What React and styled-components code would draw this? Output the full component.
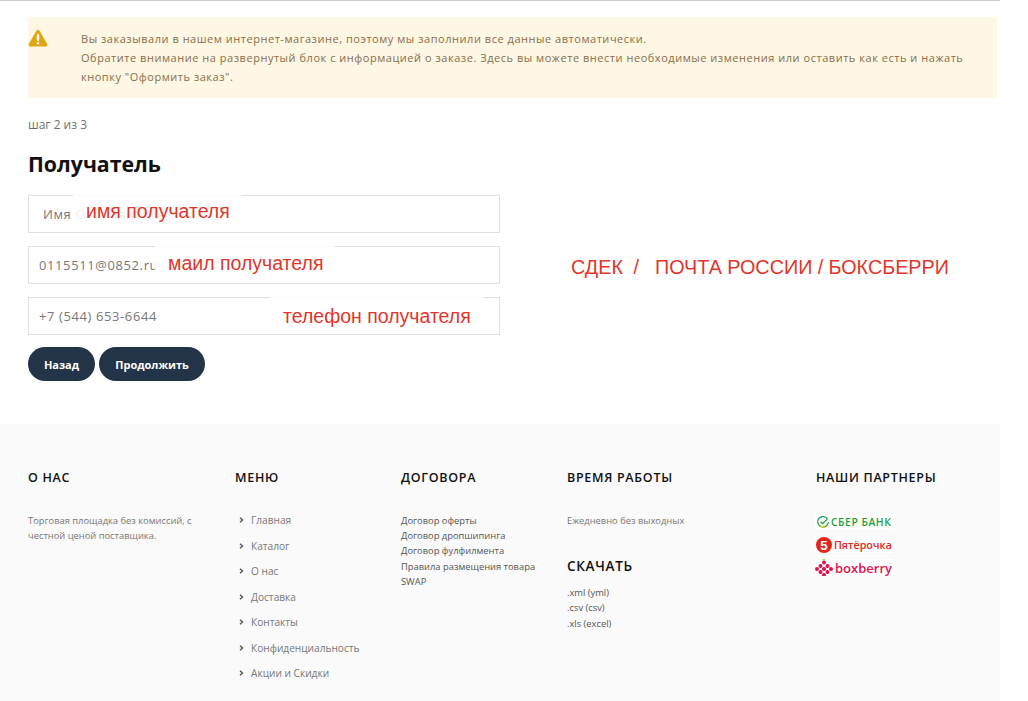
import React from 'react';
import styled, { createGlobalStyle } from 'styled-components';

const GlobalStyle = createGlobalStyle`
  html, body {
    margin: 0;
    padding: 0;
    background: #fff;
  }
  body {
    font-family: "Open Sans", "Noto Sans", sans-serif;
    overflow: hidden;
  }
`;

const Page = styled.div`
  width: 1000px;
  height: 701px;
  overflow: hidden;
  border-top: 1px solid #ccc;
`;

const Main = styled.main`
  height: 423px;
  padding: 16px 3px 0 28px;
  box-sizing: border-box;
`;

const Alert = styled.div`
  display: flex;
  height: 81px;
  box-sizing: border-box;
  padding: 12px 20px 0 0;
  background: #fdf7e3;
  color: #8a6d4b;
  font-size: 11px;
  line-height: 19px;
  letter-spacing: 0.53px;
`;

const AlertIcon = styled.div`
  flex: 0 0 53px;
  height: 20px;
`;

const Step = styled.div`
  margin-top: 18px;
  font-size: 12px;
  line-height: 17px;
  color: #707070;
`;

const Title = styled.h2`
  margin: 17px 0 0;
  font-size: 21.3px;
  line-height: 27px;
  font-weight: 700;
  color: #111;
`;

const Columns = styled.div`
  display: flex;
  align-items: flex-start;
  margin-top: 18px;
`;

const Form = styled.div`
  width: 472px;
  display: flex;
  flex-direction: column;
  gap: 13px;
`;

const Field = styled.div`
  position: relative;
  height: 38px;
  box-sizing: border-box;
  border: 1px solid #e0e0e0;
  padding-left: ${(p) => p.$pad}px;
  display: flex;
  align-items: center;
  font-size: 13px;
  letter-spacing: 0.6px;
  color: #777;
  background: #fff;
`;

const Ghost = styled.span`
  color: #888;
  margin-left: 4px;
`;

const Note = styled.span`
  position: absolute;
  left: ${(p) => p.$left}px;
  top: -1px;
  padding: ${(p) => p.$top}px 12px 0 13px;
  height: 26px;
  background: rgba(255, 255, 255, 0.86);
  font-family: "Liberation Sans", Arial, sans-serif;
  font-size: 19.5px;
  line-height: 24px;
  letter-spacing: 0;
  color: #e2352b;
  white-space: nowrap;
`;

const Buttons = styled.div`
  display: flex;
  gap: 4px;
  margin-top: -1px;
`;

const Button = styled.button`
  height: 34px;
  width: ${(p) => p.$width}px;
  padding: 0;
  border: none;
  border-radius: 17px;
  background: #233348;
  color: #fff;
  font-family: inherit;
  font-size: 11px;
  font-weight: 700;
`;

const Carriers = styled.div`
  margin: 60px 0 0 71px;
  font-family: "Liberation Sans", Arial, sans-serif;
  font-size: 19.8px;
  line-height: 24px;
  word-spacing: -0.2px;
  color: #e2352b;
  white-space: pre;
`;

const Footer = styled.footer`
  height: 277px;
  box-sizing: border-box;
  padding: 45px 0 0 28px;
  background: #fafafa;
  display: grid;
  grid-template-columns: 207px 166px 166px 249px 1fr;
`;

const Heading = styled.h4`
  margin: ${(p) => p.$top || 0}px 0 0;
  font-size: ${(p) => p.$size || 12.5}px;
  line-height: 17px;
  font-weight: 600;
  letter-spacing: 0.7px;
  text-transform: uppercase;
  color: #111;
`;

const Text = styled.p`
  margin: 27px 0 0;
  font-size: 9.35px;
  line-height: 15px;
  color: #777;
  width: 175px;
`;

const MenuList = styled.ul`
  list-style: none;
  margin: 26.5px 0 0;
  padding: 0;
  display: flex;
  flex-direction: column;
  gap: 10.5px;
`;

const MenuItem = styled.li`
  display: flex;
  align-items: center;
  height: 15px;
  font-size: 10.15px;
  color: #777;
`;

const Chevron = styled.svg`
  width: 5px;
  height: 6px;
  margin: 0 7px 0 4px;
  flex: none;
`;

const Links = styled.div`
  margin-top: ${(p) => p.$top}px;
  display: flex;
  flex-direction: column;
  font-size: 9.35px;
  line-height: 15.2px;
  color: ${(p) => p.$color || '#555'};
`;

const Logos = styled.div`
  margin: 29px 0 0 -1px;
  display: flex;
  flex-direction: column;
`;

const Logo = styled.div`
  display: flex;
  align-items: center;
  width: 78px;
  height: ${(p) => p.$height}px;
  margin-top: ${(p) => p.$gap || 0}px;
  gap: ${(p) => p.$space || 2}px;
  background: #fff;
  color: ${(p) => p.$color};
  font-size: ${(p) => p.$size}px;
  font-weight: ${(p) => p.$weight || 700};
  letter-spacing: ${(p) => p.$track || 0}px;
  white-space: nowrap;
  overflow: hidden;
`;

const WarningIcon = () => (
  <svg width="20" height="18" viewBox="0 0 20 18">
    <path d="M10 .8c.7 0 1.200.4 1.600 1l7.600 13.200c.7 1.200-.1 2.400-1.400 2.400H2.200C.9 17.400.1 16.200.8 15L8.400 1.800c.4-.6.9-1 1.600-1z" fill="#e0a510" />
    <rect x="8.800" y="5" width="2.400" height="7" rx="1" fill="#fff" />
    <circle cx="10" cy="14.300" r="1.300" fill="#fff" />
  </svg>
);

const MenuChevron = () => (
  <Chevron viewBox="0 0 5 6">
    <path d="M1 .7 3.500 3 1 5.300" fill="none" stroke="#555" strokeWidth="1.400" />
  </Chevron>
);

const SberIcon = () => (
  <svg width="12" height="12" viewBox="0 0 12 12" style={{ marginLeft: 2 }}>
    <path d="M10.500 3A5.300 5.300 0 1 0 11.300 6" fill="none" stroke="#21a038" strokeWidth="1.200" />
    <path d="M3.200 9.800A5.300 5.300 0 0 0 8 10.900" fill="none" stroke="#f2d21b" strokeWidth="1.200" />
    <path d="M1.300 3.600A5.300 5.300 0 0 1 5 .8" fill="none" stroke="#2aa7df" strokeWidth="1.200" />
    <path d="M3.600 5.700 5.600 7.600 10.300 3.100" fill="none" stroke="#21a038" strokeWidth="1.300" />
  </svg>
);

const FiveIcon = () => (
  <svg width="16" height="16" viewBox="0 0 15 15" style={{ marginLeft: 1 }}>
    <circle cx="7.500" cy="7.500" r="7.500" fill="#e3251b" />
    <text x="7.500" y="12" textAnchor="middle" fontFamily="Liberation Sans, sans-serif" fontWeight="700" fontSize="12.500" fill="#fff">5</text>
  </svg>
);

const BerryIcon = () => {
  const dots = [[9, 3.500], [5.500, 7], [12.500, 7], [2, 10], [9, 10], [16, 10], [5.500, 13], [12.500, 13], [9, 16]];
  return (
    <svg width="18" height="18" viewBox="0 0 18 18">
      {dots.map(([cx, cy]) => (
        <circle key={`${cx}-${cy}`} cx={cx} cy={cy} r="2" fill="#e4104e" />
      ))}
      <circle cx="9" cy="1" r="1.100" fill="#a8c93a" />
    </svg>
  );
};

const menu = ['Главная', 'Каталог', 'О нас', 'Доставка', 'Контакты', 'Конфиденциальность', 'Акции и Скидки'];
const contracts = ['Договор оферты', 'Договор дропшипинга', 'Договор фулфилмента', 'Правила размещения товара', 'SWAP'];
const downloads = ['.xml (yml)', '.csv (csv)', '.xls (excel)'];

export default function App() {
  return (
    <>
      <GlobalStyle />
      <Page>
        <Main>
          <Alert>
            <AlertIcon>
              <WarningIcon />
            </AlertIcon>
            <div>
              Вы заказывали в нашем интернет-магазине, поэтому мы заполнили все данные автоматически.
              <br />
              Обратите внимание на развернутый блок с информацией о заказе. Здесь вы можете внести необходимые изменения или оставить как есть и нажать кнопку "Оформить заказ".
            </div>
          </Alert>
          <Step>шаг 2 из 3</Step>
          <Title>Получатель</Title>
          <Columns>
            <Form>
              <Field $pad={14}>
                Имя <Ghost>Отправителя</Ghost>
                <Note $left={44} $top={4}>имя получателя</Note>
              </Field>
              <Field $pad={10}>
                0115511@0852.ru
                <Note $left={126} $top={5}>маил получателя</Note>
              </Field>
              <Field $pad={10}>
                +7 (544) 653-6644
                <Note $left={241} $top={7}>телефон получателя</Note>
              </Field>
              <Buttons>
                <Button $width={67}>Назад</Button>
                <Button $width={106}>Продолжить</Button>
              </Buttons>
            </Form>
            <Carriers>СДЕК  /   ПОЧТА РОССИИ / БОКСБЕРРИ</Carriers>
          </Columns>
        </Main>
        <Footer>
          <div>
            <Heading>О нас</Heading>
            <Text>Торговая площадка без комиссий, с честной ценой поставщика.</Text>
          </div>
          <div>
            <Heading>Меню</Heading>
            <MenuList>
              {menu.map((item) => (
                <MenuItem key={item}>
                  <MenuChevron />
                  {item}
                </MenuItem>
              ))}
            </MenuList>
          </div>
          <div>
            <Heading>Договора</Heading>
            <Links $top={27}>
              {contracts.map((item) => (
                <span key={item}>{item}</span>
              ))}
            </Links>
          </div>
          <div>
            <Heading>Время работы</Heading>
            <Links $top={27} $color="#777">
              <span>Ежедневно без выходных</span>
            </Links>
            <Heading $top={30} $size={13.5}>Скачать</Heading>
            <Links $top={10}>
              {downloads.map((item) => (
                <span key={item}>{item}</span>
              ))}
            </Links>
          </div>
          <div>
            <Heading>Наши партнеры</Heading>
            <Logos>
              <Logo $height={14} $color="#21a038" $size={10.4} $weight={600} $track={0.5}>
                <SberIcon />
                СБЕР БАНК
              </Logo>
              <Logo $height={17} $gap={7} $color="#e3251b" $size={10.7} $weight={600} $space={2}>
                <FiveIcon />
                Пятёрочка
              </Logo>
              <Logo $height={17} $gap={6} $color="#e4104e" $size={13} $weight={600} $space={2}>
                <BerryIcon />
                boxberry
              </Logo>
            </Logos>
          </div>
        </Footer>
      </Page>
    </>
  );
}
